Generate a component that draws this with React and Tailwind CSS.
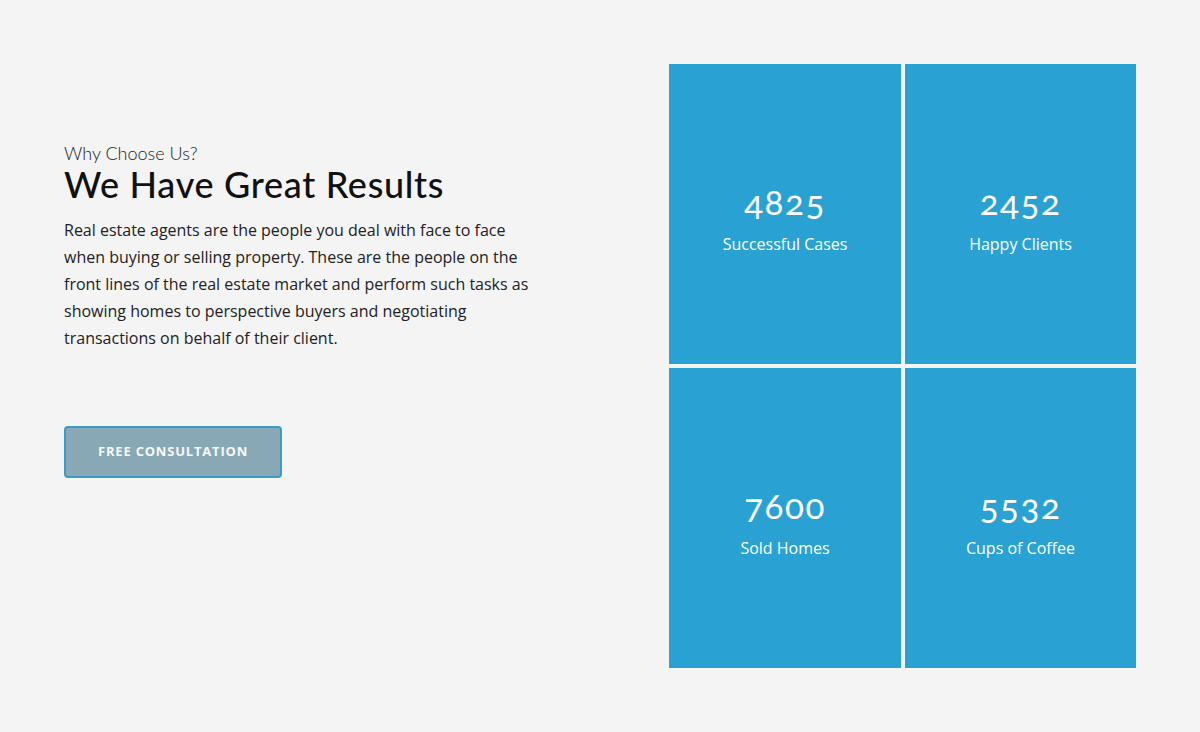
export default function App() {
  const stats = [
    { n: "4825", l: "Successful Cases" },
    { n: "2452", l: "Happy Clients" },
    { n: "7600", l: "Sold Homes" },
    { n: "5532", l: "Cups of Coffee" },
  ];
  return (
    <div className="w-[1200px] h-[732px] bg-[#f4f4f4] flex px-16 pt-16">
      <div className="w-[476px] pt-[78px]">
        <div className="font-['Lato',sans-serif] text-[18px] leading-[22px] text-[#222] font-light">
          Why Choose Us?
        </div>
        <h1 className="font-['Lato',sans-serif] text-[36px] leading-[40px] tracking-[0.7px] text-[#111] font-medium">
          We Have Great Results
        </h1>
        <p className="font-['Open_Sans',sans-serif] mt-[13px] text-[16px] leading-[27px] text-[#222]">
          Real estate agents are the people you deal with face to face when buying or selling property. These are the people on the front lines of the real estate market and perform such tasks as showing homes to perspective buyers and negotiating transactions on behalf of their client.
        </p>
        <button className="font-['Open_Sans',sans-serif] mt-[74px] w-[218px] h-[52px] rounded-[4px] border-2 border-[#3a9cc9] bg-[#87a8b4] text-[#f8f8f8] text-[13px] font-bold tracking-[0.8px] uppercase">
          Free Consultation
        </button>
      </div>
      <div className="ml-auto w-[467px] h-[604px] grid grid-cols-[232px_231px] grid-rows-[300px_300px] gap-[4px]">
        {stats.map((s) => (
          <div key={s.n} className="bg-[#29a2d3] flex flex-col items-center justify-center text-white pt-[8px]">
            <div className="font-['Lato',sans-serif] oldstyle-nums text-[35px] leading-[40px] tracking-[1.5px]">{s.n}</div>
            <div className="font-['Open_Sans',sans-serif] mt-[12px] text-[16px] leading-[22px]">{s.l}</div>
          </div>
        ))}
      </div>
    </div>
  );
}
